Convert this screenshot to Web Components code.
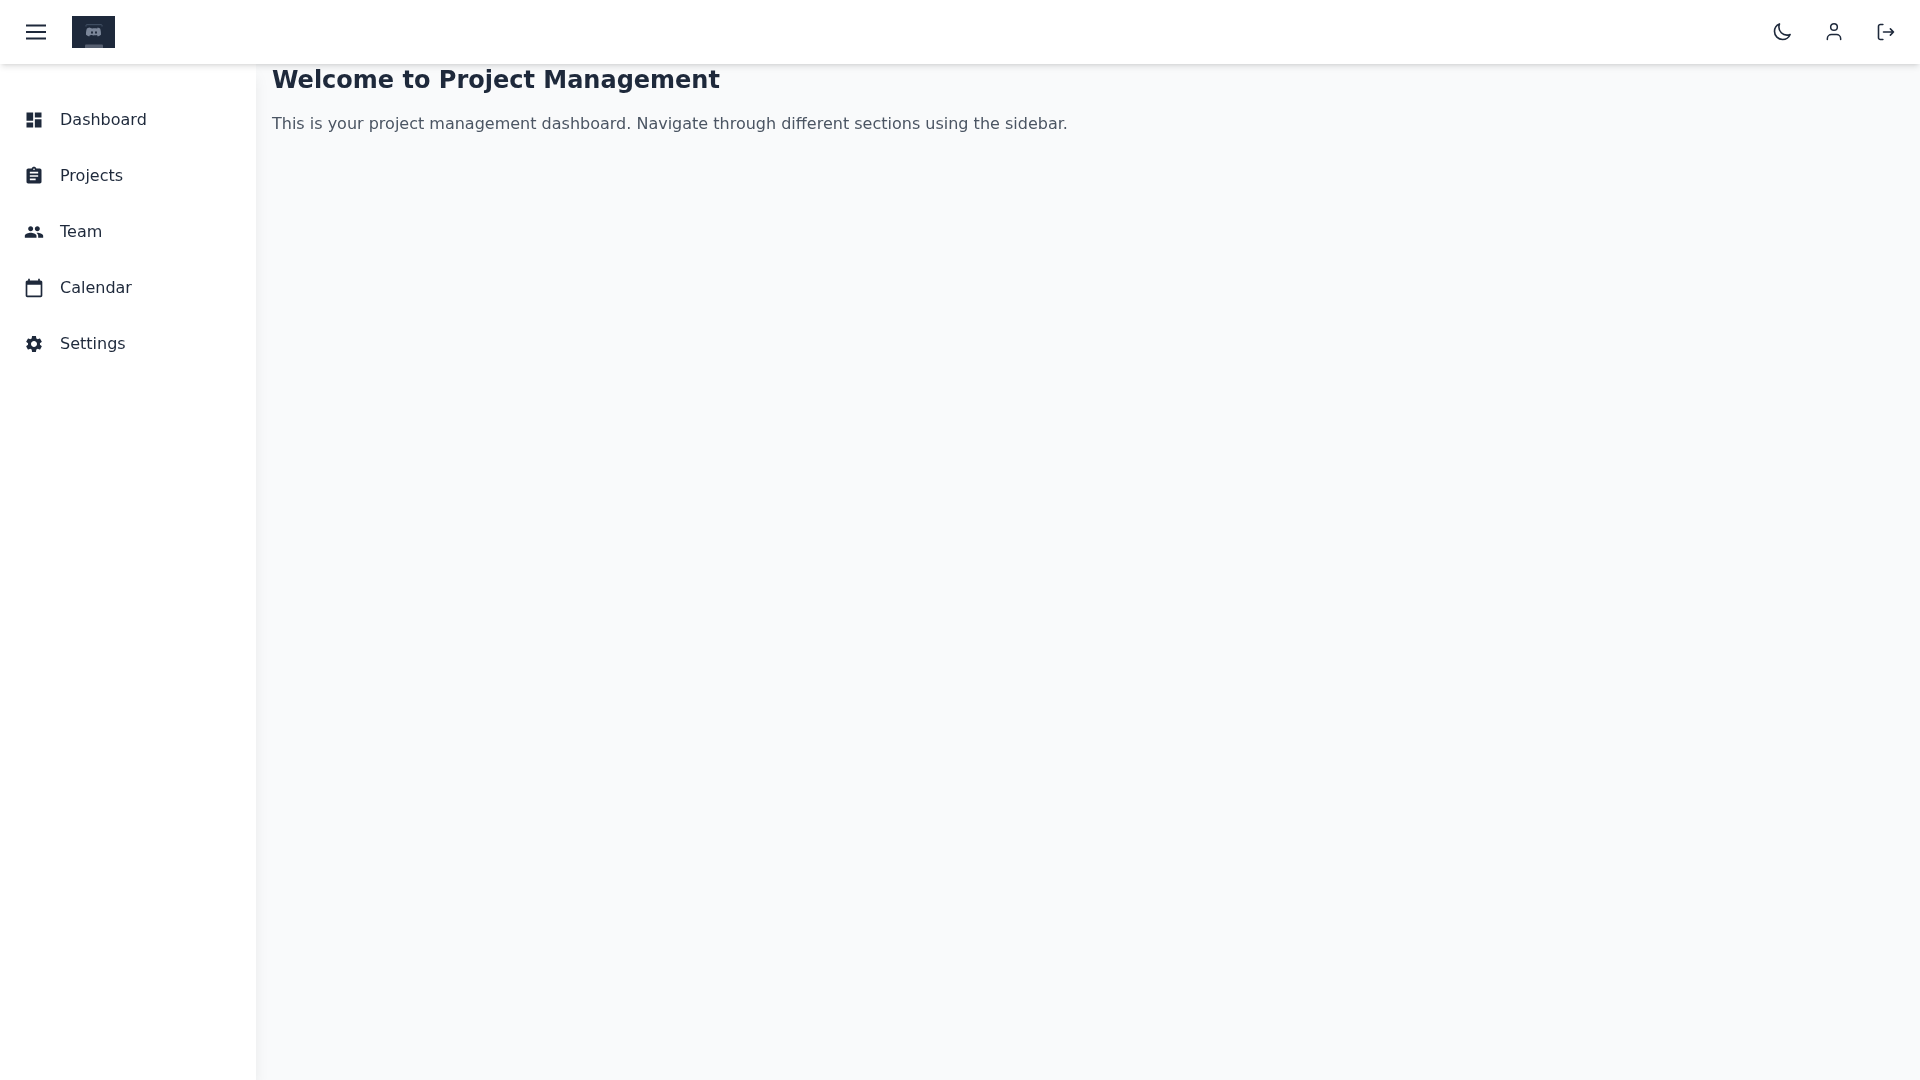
<!DOCTYPE html>
<html lang="en">
<head>
<meta charset="utf-8">
<title>Project Management</title>
<style>
html,body{margin:0;padding:0;height:100%;}
body{font-family:"DejaVu Sans",sans-serif;color:#1e293b;background:#f9fafb;}
</style>
</head>
<body>
<app-shell>
  <app-header slot="header"></app-header>
  <app-sidebar slot="sidebar">
    <nav-item icon="dashboard">Dashboard</nav-item>
    <nav-item icon="projects">Projects</nav-item>
    <nav-item icon="team">Team</nav-item>
    <nav-item icon="calendar">Calendar</nav-item>
    <nav-item icon="settings">Settings</nav-item>
  </app-sidebar>
  <welcome-panel heading="Welcome to Project Management">This is your project management dashboard. Navigate through different sections using the sidebar.</welcome-panel>
</app-shell>
<script>
const ICONS={
 dashboard:'<path d="M3 13h8V3H3v10zm0 8h8v-6H3v6zm10 0h8V11h-8v10zm0-18v6h8V3h-8z"/>',
 projects:'<path d="M19 3h-4.18C14.4 1.84 13.3 1 12 1c-1.3 0-2.4.84-2.82 2H5c-1.1 0-2 .9-2 2v14c0 1.1.9 2 2 2h14c1.1 0 2-.9 2-2V5c0-1.1-.9-2-2-2zm-7 0c.55 0 1 .45 1 1s-.45 1-1 1-1-.45-1-1 .45-1 1-1zm2 14H7v-2h7v2zm3-4H7v-2h10v2zm0-4H7V7h10v2z"/>',
 team:'<path d="M16 11c1.66 0 2.99-1.34 2.99-3S17.66 5 16 5c-1.66 0-3 1.34-3 3s1.34 3 3 3zm-8 0c1.66 0 2.99-1.34 2.99-3S9.66 5 8 5C6.34 5 5 6.34 5 8s1.34 3 3 3zm0 2c-2.33 0-7 1.17-7 3.5V19h14v-2.5c0-2.33-4.67-3.5-7-3.5zm8 0c-.29 0-.62.02-.97.05 1.16.84 1.97 1.97 1.97 3.45V19h6v-2.5c0-2.33-4.67-3.5-7-3.5z"/>',
 calendar:'<path d="M20 3h-1V1h-2v2H7V1H5v2H4c-1.1 0-2 .9-2 2v16c0 1.1.9 2 2 2h16c1.1 0 2-.9 2-2V5c0-1.1-.9-2-2-2zm0 18H4V8h16v13z"/>',
 settings:'<path d="M19.14 12.94c.04-.3.06-.61.06-.94 0-.32-.02-.64-.07-.94l2.03-1.58c.18-.14.23-.41.12-.61l-1.92-3.32c-.12-.22-.37-.29-.59-.22l-2.39.96c-.5-.38-1.03-.7-1.62-.94l-.36-2.54c-.04-.24-.24-.41-.48-.41h-3.84c-.24 0-.43.17-.47.41l-.36 2.54c-.59.24-1.13.57-1.62.94l-2.39-.96c-.22-.08-.47 0-.59.22L2.74 8.87c-.12.21-.08.47.12.61l2.03 1.58c-.05.3-.09.63-.09.94s.02.64.07.94l-2.03 1.58c-.18.14-.23.41-.12.61l1.92 3.32c.12.22.37.29.59.22l2.39-.96c.5.38 1.03.7 1.62.94l.36 2.54c.05.24.24.41.48.41h3.84c.24 0 .44-.17.47-.41l.36-2.54c.59-.24 1.13-.56 1.62-.94l2.39.96c.22.08.47 0 .59-.22l1.92-3.32c.12-.22.07-.47-.12-.61l-2.01-1.58zM12 15.6c-1.98 0-3.6-1.62-3.6-3.6s1.62-3.6 3.6-3.6 3.6 1.62 3.6 3.6-1.62 3.6-3.6 3.6z"/>'
};
function define(name,html,setup){
  customElements.define(name,class extends HTMLElement{
    constructor(){super();const r=this.attachShadow({mode:'open'});r.innerHTML=html;}
    connectedCallback(){if(setup)setup(this);}
  });
}
define('app-shell',`<style>
:host{display:grid;grid-template-columns:256px 1fr;grid-template-rows:64px 1fr;height:100vh;overflow:hidden;}
.h{grid-column:1/3;position:relative;z-index:2;display:block;}
main{min-width:0;}
</style>
<div class="h"><slot name="header"></slot></div>
<slot name="sidebar"></slot>
<main><slot></slot></main>`);
define('app-header',`<style>
:host{display:flex;align-items:center;justify-content:space-between;height:64px;box-sizing:border-box;padding:0 14px 0 16px;background:#fff;box-shadow:0 4px 6px -1px rgba(0,0,0,.1),0 2px 4px -2px rgba(0,0,0,.1);}
.l,.r{display:flex;align-items:center;}
.r{gap:12px;}
.b{display:flex;width:40px;height:40px;align-items:center;justify-content:center;color:#1e293b;}
svg{display:block;}
.logo{margin-left:16px;}
</style>
<div class="l">
 <div class="b"><svg width="24" height="24" viewBox="0 0 24 24" fill="none" stroke="currentColor" stroke-width="2"><path d="M2 5.5h20M2 12h20M2 18.5h20"/></svg></div>
 <svg class="logo" width="43" height="32" viewBox="0 0 43 32">
  <rect width="43" height="32" fill="#1e293b"/>
  <path d="M14 10.5v-1.2q0-.6.6-.6h14.8q.6 0 .6.6v1.2" stroke="#475569" stroke-width="1" fill="none"/>
  <path d="M17.3 11.4c-1 .2-1.8.5-2.4 1-.6 1.6-1 3.6-.9 6.4.9.9 2 1.4 3.2 1.6l.8-1.3c1.3.4 5.7.4 7 0l.8 1.3c1.2-.2 2.3-.7 3.2-1.6.1-2.8-.3-4.8-.9-6.4-.6-.5-1.4-.8-2.4-1l-.5 1c-1.6-.3-3.8-.3-5 0z" fill="#7b8699"/>
  <ellipse cx="20" cy="16.5" rx="1" ry="1.2" fill="#1e293b"/><ellipse cx="24" cy="16.5" rx="1" ry="1.2" fill="#1e293b"/>
  <path d="M13 32v-2.500q0-1 1-1h16q1 0 1 1V32z" fill="#565f70"/>
 </svg>
</div>
<div class="r">
 <div class="b"><svg width="20" height="20" viewBox="0 0 24 24" fill="none" stroke="currentColor" stroke-width="1.9" stroke-linecap="round" stroke-linejoin="round"><path d="M21.752 15.002A9.72 9.72 0 0 1 18 15.75c-5.385 0-9.75-4.365-9.75-9.750 0-1.33.266-2.597.748-3.752A9.753 9.753 0 0 0 3 11.250C3 16.635 7.365 21 12.750 21a9.753 9.753 0 0 0 9.002-5.998Z"/></svg></div>
 <div class="b"><svg width="20" height="20" viewBox="0 0 24 24" fill="none" stroke="currentColor" stroke-width="1.8" stroke-linecap="round" stroke-linejoin="round"><path d="M16 6a4 4 0 1 1-8 0 4 4 0 0 1 8 0ZM4 21v-1a5 5 0 0 1 5-5h6a5 5 0 0 1 5 5v1"/></svg></div>
 <div class="b"><svg width="20" height="20" viewBox="0 0 24 24" fill="none" stroke="currentColor" stroke-width="1.9" stroke-linecap="round" stroke-linejoin="round"><path d="M8.250 3H5.250A2.250 2.250 0 0 0 3 5.250v13.500A2.250 2.250 0 0 0 5.250 21h3M9 12h12m0 0-3.750-3.750M21 12l-3.750 3.750"/></svg></div>
</div>`);
define('app-sidebar',`<style>
:host{display:block;background:#fff;box-shadow:0 10px 15px -3px rgba(0,0,0,.1),0 4px 6px -4px rgba(0,0,0,.1);padding-top:27px;position:relative;z-index:1;}
</style><slot></slot>`);
define('nav-item',`<style>
:host{display:flex;align-items:center;height:56px;box-sizing:border-box;padding-left:24px;gap:16px;font-size:16px;color:#1e293b;will-change:transform;}
svg{display:block;fill:currentColor;flex:none;margin-top:2px;}
</style><svg width="20" height="20" viewBox="0 0 24 24"></svg><span><slot></slot></span>`,el=>{
  el.shadowRoot.querySelector('svg').innerHTML=ICONS[el.getAttribute('icon')];
});
define('welcome-panel',`<style>
:host{display:block;padding:0 16px;will-change:transform;}
h1{margin:0 0 16px;font-size:24px;line-height:32px;font-weight:700;color:#1e293b;}
p{margin:0;font-size:16px;line-height:24px;color:#4b5563;}
</style><h1></h1><p><slot></slot></p>`,el=>{
  el.shadowRoot.querySelector('h1').textContent=el.getAttribute('heading');
});
</script>
</body>
</html>
